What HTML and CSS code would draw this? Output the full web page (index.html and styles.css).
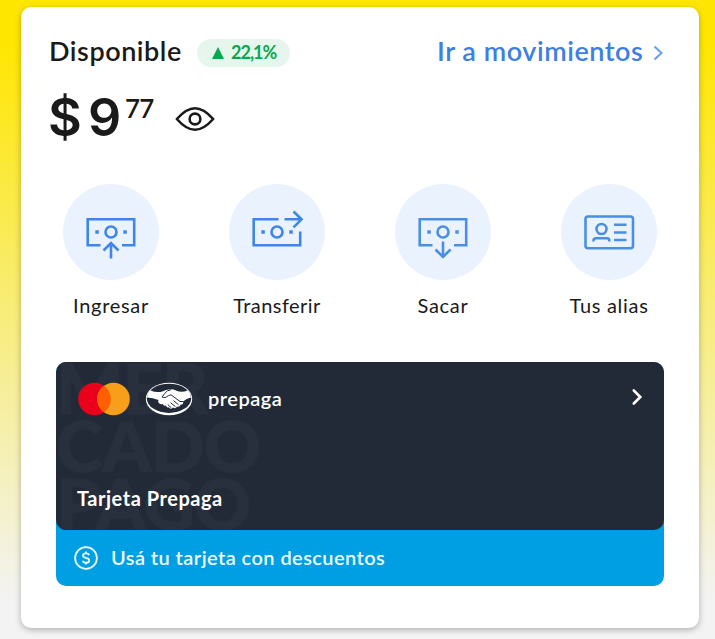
FILE: index.html
```html
<!DOCTYPE html>
<html lang="es">
<head>
<meta charset="utf-8">
<title>Disponible</title>
<link rel="stylesheet" href="styles.css">
</head>
<body>
<main class="panel">
  <header class="top">
    <h1 class="title">Disponible</h1>
    <span class="badge"><svg width="12" height="12" viewBox="0 0 12 12"><path d="M6 0 12 12H0z" fill="#0aa650"/></svg><span class="rate">22,1%</span></span>
    <a class="link"><span class="link-text">Ir a movimientos</span><svg width="10" height="16" viewBox="0 0 10 16" fill="none" stroke="#6a9fe8" stroke-width="2"><path d="M.5 1.500 7.500 8 .5 14.500"/></svg></a>
  </header>
  <section class="balance">
    <span class="currency">$</span><span class="amount">9</span><span class="cents">77</span>
    <svg class="eye" width="40" height="26" viewBox="0 0 40 26" fill="none" stroke="#1a1a1a" stroke-width="2.600" stroke-linejoin="round"><path d="M1.800 13C8 6 13.500 2.200 20 2.200S32 6 38.200 13C32 20 26.500 23.800 20 23.800S8 20 1.800 13z"/><circle cx="20" cy="13" r="5.400"/></svg>
  </section>
  <nav class="actions">
    <a class="action"><span class="disc"><svg width="96" height="96" viewBox="0 0 96 96" fill="none" stroke="#3e86e8" stroke-width="2.600"><path d="M37.500 61.200H24.700V35.300H71.200V61.200H59M48 74.500V59M40.500 66.500 48 59l7.500 7.500"/><circle cx="48" cy="48" r="5.500"/><path d="M32.300 48h3.500M60.300 48h3.500" stroke-width="3.500"/></svg></span><span class="label">Ingresar</span></a>
    <a class="action"><span class="disc"><svg width="96" height="96" viewBox="0 0 96 96" fill="none" stroke="#3e86e8" stroke-width="2.600"><path d="M49.500 35.300H24.700V61.200H71.200V47.500M55.500 35.300H72M64.500 27.500l8 7.800-8 8"/><circle cx="48" cy="48" r="5.500"/><path d="M32.300 48h3.500M60.300 48h3.500" stroke-width="3.500"/></svg></span><span class="label transferir">Transferir</span></a>
    <a class="action"><span class="disc"><svg width="96" height="96" viewBox="0 0 96 96" fill="none" stroke="#4a8fe2" stroke-width="2.600"><path d="M37.500 61.200H24.700V35.300H71.200V61.200H59M48 57.500V73M40.500 65.500 48 73l7.500-7.500"/><circle cx="48" cy="48" r="5.500"/><path d="M32.300 48h3.500M60.300 48h3.500" stroke-width="3.500"/></svg></span><span class="label">Sacar</span></a>
    <a class="action"><span class="disc"><svg width="96" height="96" viewBox="0 0 96 96" fill="none" stroke="#4a8fe2" stroke-width="2.600"><rect x="24.500" y="32.500" width="47.500" height="31.800" rx="2.500"/><circle cx="40.500" cy="45" r="5"/><path d="M32.500 57.500V56.500Q32.500 54.200 35 54.200H46Q48.300 54.200 48.300 56.500V57.500M53 40.800H65.500M53 48.500H65.500M53 56H65.500"/></svg></span><span class="label">Tus alias</span></a>
  </nav>
  <section class="product">
    <div class="card">
      <div class="watermark" aria-hidden="true"><span>MER</span><span>CADO</span><span>PAGO</span></div>
      <div class="brands">
        <svg width="52" height="34" viewBox="0 0 52 34"><circle cx="16.500" cy="17" r="16.300" fill="#eb001b"/><circle cx="35.500" cy="17" r="16.300" fill="#f79e1b"/><path d="M26 3.750A16.300 16.300 0 0 1 26 30.250A16.300 16.300 0 0 1 26 3.750z" fill="#ff5f00"/></svg>
        <svg class="hands" width="48" height="34" viewBox="0 0 48 34"><ellipse cx="24" cy="17" rx="23.200" ry="16.300" fill="#fff"/><ellipse cx="24" cy="16.300" rx="22.200" ry="14.600" fill="#232a37"/><path d="M5 8.200Q12 11.400 18 9.200Q21 7.500 24 7.400Q28 7 31.500 8.800Q37 11 43 8.200Q46 12 46 15.500Q41 16.300 38.200 19.500Q38.500 22.800 35.400 22.700Q34.800 25.500 32 24.600Q30.600 27.200 28 25.500Q25.500 28 23.800 25.200Q21.500 26 21 23.500Q18.500 24.500 17.800 22Q15 23 13.500 20.600Q12.500 19 13.600 18Q8 15.800 2 15.500Q2 11.500 5 8.200z" fill="#fff"/><path d="M26 7.700Q22 8 19.700 11.500L17 15Q20 17 23.500 13.600L26 12.800L35 19.500L38.300 19.500M28.500 18.700l5 4M25.500 20.700l5 4M22.800 22.500l3.500 3.300" fill="none" stroke="#232a37" stroke-width="1"/></svg>
        <span class="prepaga">prepaga</span>
        <svg class="go" width="12" height="18" viewBox="0 0 12 18" fill="none" stroke="#fff" stroke-width="2.600" stroke-linecap="round"><path d="M2.800 2.500 9.300 9 2.800 15.500"/></svg>
      </div>
      <p class="card-name">Tarjeta Prepaga</p>
    </div>
    <div class="promo"><svg width="24" height="24" viewBox="0 0 24 24" fill="none" stroke="#e8fbff" stroke-width="1.800"><circle cx="12" cy="12" r="10.900"/><path d="M15.200 9.200Q14.500 7.400 12 7.400Q9 7.400 9 9.600Q9 11.400 12 12Q15.200 12.500 15.200 14.400Q15.200 16.700 12 16.700Q9.300 16.700 8.700 14.700M12 5.500V7.400M12 16.700V18.500"/></svg><span class="promo-text">Usá tu tarjeta con descuentos</span></div>
  </section>
</main>
</body>
</html>
```
FILE: styles.css
```css
* { box-sizing: border-box; }
body {
  margin: 0;
  height: 639px;
  overflow: hidden;
  padding: 7px 16px 11px 21px;
  background: linear-gradient(#ffe600 0, #ffe600 40px, #f8ec6c 280px, #f3f3f3 600px);
  font-family: Lato, "Open Sans", sans-serif;
  color: #1a1a1a;
}
svg { display: block; flex: none; }
.panel {
  height: 621px;
  padding: 30px 35px 0 28px;
  border-radius: 10px;
  background: #fff;
  box-shadow: 0 2px 6px rgba(0, 0, 0, .28);
}
.top { display: flex; align-items: center; height: 31px; white-space: nowrap; }
.title { margin: 0; width: 148px; padding-bottom: 3px; font-size: 27px; font-weight: 600; line-height: 28px; letter-spacing: .55px; }
.badge {
  display: flex;
  align-items: center;
  gap: 7px;
  width: 93px;
  height: 28px;
  padding-left: 15px;
  border-radius: 14px;
  background: #e6f6ed;
  color: #0aa650;
}
.rate { padding-bottom: 1px; font-size: 18px; font-weight: 700; line-height: 26px; letter-spacing: -1px; }
.link { display: flex; align-items: center; gap: 10px; margin-left: auto; color: #3d80e4; }
.link-text { width: 207px; padding-bottom: 3px; font-size: 27px; font-weight: 600; line-height: 28px; letter-spacing: .55px; }
.balance { display: flex; align-items: flex-start; height: 75px; padding-top: 18px; }
.currency, .amount { width: 40px; padding-top: 1px; font-family: Inter, sans-serif; font-size: 52px; font-weight: 600; line-height: 62px; }
.currency { margin-left: -1px; }
.amount { width: 37px; }
.cents { width: 50px; padding-top: 7px; font-size: 26px; line-height: 31px; font-weight: 600; letter-spacing: -.8px; }
.eye { margin-top: 20px; }
.actions { display: flex; justify-content: space-between; margin: 41px 7px 0 14px; }
.action { width: 96px; display: flex; flex-direction: column; align-items: center; }
.disc { width: 96px; height: 96px; border-radius: 50%; background: #eaf2fd; }
.label { margin: 12px 0 2px; font-size: 20px; line-height: 26px; letter-spacing: .7px; white-space: nowrap; }
.transferir { letter-spacing: .45px; }
.product { margin: 42px 0 0 7px; width: 608px; height: 224px; border-radius: 10px; background: #009ee3; overflow: hidden; }
.card {
  position: relative;
  display: flex;
  flex-direction: column;
  justify-content: space-between;
  height: 168px;
  padding: 19px 21px 18px 22px;
  border-radius: 0 0 10px 10px;
  background: #232a37;
  overflow: hidden;
  color: #fff;
}
.watermark {
  position: absolute;
  left: 0;
  top: -4px;
  display: flex;
  flex-direction: column;
  color: #29303d;
  font-size: 71px;
  font-weight: 900;
  line-height: 58px;
  letter-spacing: -1px;
  -webkit-text-stroke: 1px #29303d;
}
.brands { position: relative; display: flex; align-items: center; height: 36px; }
.hands { margin-left: 15px; }
.prepaga { margin-left: 15px; padding-bottom: 3px; font-size: 20px; font-weight: 600; letter-spacing: .5px; }
.go { margin: 0 0 4px auto; }
.card-name { position: relative; margin: 0 0 0 -1px; font-size: 20px; font-weight: 700; line-height: 28px; letter-spacing: .53px; }
.promo { display: flex; align-items: center; gap: 13px; height: 56px; padding-left: 18px; color: #effcff; }
.promo-text { padding-bottom: 2px; font-size: 20px; font-weight: 600; letter-spacing: .43px; }
```
